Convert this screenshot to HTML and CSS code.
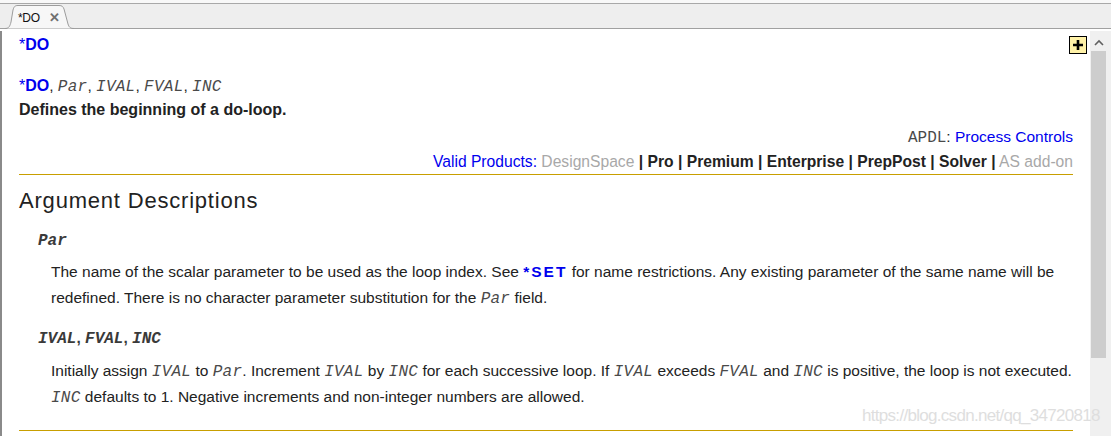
FILE: index.html
```html
<!DOCTYPE html>
<html>
<head>
<meta charset="utf-8">
<link rel="stylesheet" href="styles.css">
</head>
<body>
<div class="window">
  <div class="topstrip"></div>
  <div class="tabbar">
    <div class="tab">
      <svg class="tab-shape" width="70" height="25" viewBox="0 0 70 25">
        <path d="M0 24.5 C4 24.5 5 22 6 18 L8 6 C9 2.5 10 1.5 13 1.5 L54 1.5 C57 1.5 58 2.5 59 5 L63 20 C64 23 65 24.5 69 24.5" fill="#f7f7f7" stroke="#9c9c9c" stroke-width="1"/>
      </svg>
      <span class="tab-label">*DO</span>
      <span class="tab-close">✕</span>
    </div>
  </div>
  <div class="main">
    <div class="content">
      <div class="title-row">
        <div class="title"><span class="star">*</span>DO</div>
        <div class="expand">
          <svg width="12" height="12" viewBox="0 0 12 12"><path d="M6 1V11M1 6H11" stroke="#000" stroke-width="2.6"/></svg>
        </div>
      </div>
      <div class="syntax"><span class="cmd"><span class="star">*</span>DO</span>, <span class="arg">Par</span>, <span class="arg">IVAL</span>, <span class="arg">FVAL</span>, <span class="arg">INC</span></div>
      <div class="desc">Defines the beginning of a do-loop.</div>
      <div class="category"><span class="mono">APDL</span>: <span class="link">Process Controls</span></div>
      <div class="products"><span class="link">Valid Products:</span> <span class="na">DesignSpace</span> <b>|</b> <b>Pro</b> <b>|</b> <b>Premium</b> <b>|</b> <b>Enterprise</b> <b>|</b> <b>PrepPost</b> <b>|</b> <b>Solver</b> <b>|</b> <span class="na">AS add-on</span></div>
      <div class="rule"></div>
      <h2 class="section">Argument Descriptions</h2>
      <div class="argname"><span class="argcode">Par</span></div>
      <p class="argdesc">The name of the scalar parameter to be used as the loop index. See <span class="xref">*SET</span> for name restrictions. Any existing parameter of the same name will be redefined. There is no character parameter substitution for the <span class="arg">Par</span> field.</p>
      <div class="argname argname2"><span class="argcode">IVAL</span>, <span class="argcode">FVAL</span>, <span class="argcode">INC</span></div>
      <p class="argdesc argdesc2">Initially assign <span class="arg">IVAL</span> to <span class="arg">Par</span>. Increment <span class="arg">IVAL</span> by <span class="arg">INC</span> for each successive loop. If <span class="arg">IVAL</span> exceeds <span class="arg">FVAL</span> and <span class="arg">INC</span> is positive, the loop is not executed. <span class="arg">INC</span> defaults to 1. Negative increments and non-integer numbers are allowed.</p>
      <div class="rule rule-bottom"></div>
    </div>
    <div class="scrollbar">
      <div class="sb-arrow">
        <svg width="10" height="7" viewBox="0 0 10 7"><path d="M1 6L5 2L9 6" fill="none" stroke="#606060" stroke-width="1.6"/></svg>
      </div>
      <div class="sb-thumb"></div>
    </div>
  </div>
  <div class="watermark">https://blog.csdn.net/qq_34720818</div>
</div>
</body>
</html>
```

FILE: styles.css
```css
html, body {
  margin: 0;
  padding: 0;
  background: #ffffff;
}
body {
  font-family: "Liberation Sans", Arial, sans-serif;
  color: #222222;
  width: 1111px;
  height: 436px;
  overflow: hidden;
}
.window {
  position: relative;
  width: 1111px;
  height: 436px;
  display: flex;
  flex-direction: column;
}
.topstrip {
  height: 3px;
  background: #f8f8f8;
  border-bottom: 1px solid #a8a8a8;
}
.tabbar {
  height: 24px;
  background: #eeeeee;
  border-bottom: 1px solid #a0a0a0;
  display: flex;
  align-items: flex-end;
  padding-left: 5px;
}
.tab {
  position: relative;
  width: 70px;
  height: 25px;
  margin-bottom: -1px;
  display: flex;
  align-items: center;
  font-size: 12px;
  color: #111;
}
.tab-shape {
  position: absolute;
  left: 0;
  top: 0;
}
.tab-label {
  position: relative;
  margin-left: 13px;
  margin-top: 2px;
  letter-spacing: -0.3px;
}
.tab-close {
  position: relative;
  margin-left: 9px;
  margin-top: 2px;
  font-size: 13px;
  font-weight: bold;
  color: #707070;
}
.main {
  flex: 1;
  display: flex;
  min-height: 0;
  padding-top: 2px;
}
.content {
  flex: 1;
  border-left: 2px solid #8a8a8a;
  padding: 0 17px 0 17px;
  min-width: 0;
}
.title-row {
  display: flex;
  justify-content: space-between;
  align-items: flex-start;
  margin-top: 4px;
  height: 19px;
}
.title {
  font-size: 16px;
  line-height: 18px;
  font-weight: bold;
  color: #0000ee;
  margin-top: 1px;
}
.star {
  font-weight: normal;
}
.expand {
  width: 16px;
  height: 16px;
  border: 1px solid #000;
  background: #fff2a8;
  display: flex;
  align-items: center;
  justify-content: center;
  margin-right: -14px;
  margin-top: 1px;
}
.expand svg {
  display: block;
}
.syntax {
  margin-top: 23px;
  font-size: 15.5px;
  line-height: 18px;
  color: #222;
}
.cmd {
  color: #0000ee;
  font-weight: bold;
  font-size: 16px;
}
.arg {
  font-family: "Liberation Mono", "Courier New", monospace;
  font-style: italic;
  font-size: 16px;
  line-height: 1;
  letter-spacing: 0.25px;
  color: #4a4a4a;
}
.desc {
  margin-top: 6px;
  font-size: 16px;
  line-height: 18px;
  font-weight: bold;
  color: #222;
}
.category {
  margin-top: 9px;
  text-align: right;
  font-size: 15.5px;
  line-height: 18px;
}
.mono {
  font-family: "Liberation Mono", "Courier New", monospace;
  font-size: 16px;
  line-height: 1;
  color: #4a4a4a;
}
.link {
  color: #0000ee;
}
.products {
  margin-top: 7px;
  text-align: right;
  font-size: 15.65px;
  line-height: 18px;
  color: #222;
}
.na {
  color: #a8a8a8;
}
.rule {
  margin-top: 3px;
  border-top: 1px solid #c89f00;
}
.section {
  margin: 13px 0 0 0;
  font-size: 22px;
  line-height: 26px;
  font-weight: normal;
  letter-spacing: 0.8px;
  color: #222;
}
.argname {
  margin-top: 17px;
  margin-left: 19px;
  font-weight: bold;
  font-size: 15.5px;
  line-height: 18px;
  color: #3a3a3a;
}
.argcode {
  font-family: "Liberation Mono", "Courier New", monospace;
  font-style: italic;
  font-weight: bold;
  font-size: 16px;
  line-height: 1;
}
.argname2 {
  margin-top: 19px;
}
.argdesc {
  margin: 10px 0 0 32px;
  font-size: 15.5px;
  line-height: 25.5px;
  color: #222;
}
.argdesc2 {
  margin-top: 11px;
}
.xref {
  color: #0000ee;
  font-weight: bold;
  letter-spacing: 2px;
}
.rule-bottom {
  margin-top: 21px;
}
.scrollbar {
  width: 21px;
  background: #f0f0f0;
  display: flex;
  flex-direction: column;
  align-items: flex-start;
}
.sb-arrow {
  width: 17px;
  height: 17px;
  display: flex;
  align-items: center;
  justify-content: center;
  margin-top: 3px;
}
.sb-thumb {
  width: 15px;
  height: 307px;
  margin-left: 1px;
  background: #cdcdcd;
}
.watermark {
  position: absolute;
  left: 862px;
  top: 405px;
  font-size: 17px;
  line-height: 22px;
  color: #dedede;
  letter-spacing: -0.7px;
}
```
